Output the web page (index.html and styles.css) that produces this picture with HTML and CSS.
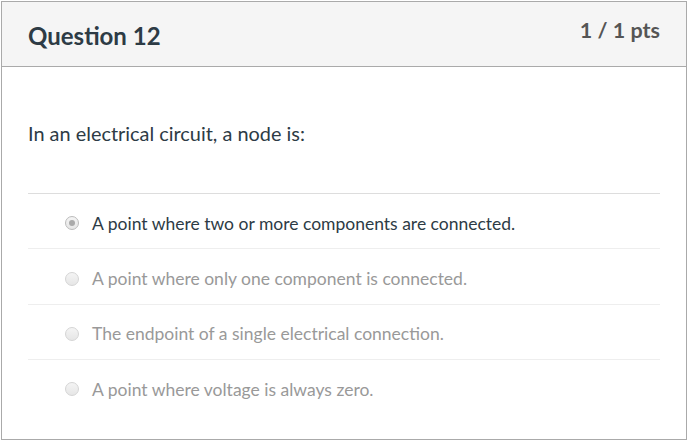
FILE: index.html
```html
<!DOCTYPE html>
<html>
<head>
<meta charset="utf-8">
<link rel="stylesheet" href="styles.css">
</head>
<body>
<div class="card">
  <div class="header">
    <div class="title">Question 12</div>
    <div class="pts">1 / 1 pts</div>
  </div>
  <div class="content">
    <p class="question">In an electrical circuit, a node is:</p>
    <div class="answers">
      <div class="answer selected"><span class="radio"></span><span class="label">A point where two or more components are connected.</span></div>
      <div class="answer"><span class="radio"></span><span class="label">A point where only one component is connected.</span></div>
      <div class="answer"><span class="radio"></span><span class="label">The endpoint of a single electrical connection.</span></div>
      <div class="answer"><span class="radio"></span><span class="label">A point where voltage is always zero.</span></div>
    </div>
  </div>
</div>
</body>
</html>
```

FILE: styles.css
```css
html, body {
  margin: 0;
  padding: 0;
  background: #fff;
}
body {
  padding: 1px;
  font-family: Lato, "Liberation Sans", sans-serif;
  color: #2d3b45;
}
.card {
  width: 684px;
  height: 437px;
  border: 1px solid #aaa;
  box-sizing: content-box;
}
.header {
  display: flex;
  justify-content: space-between;
  align-items: flex-start;
  height: 64px;
  background: #f5f5f5;
  border-bottom: 1px solid #aaa;
  padding: 0 26px 0 26px;
}
.title {
  font-size: 24px;
  line-height: 28px;
  font-weight: 700;
  margin-top: 20px;
  color: #2d3b45;
}
.pts {
  font-size: 21.5px;
  line-height: 26px;
  font-weight: 700;
  margin-top: 15px;
  color: #555;
}
.content {
  padding: 0 26px;
}
.question {
  margin: 0;
  padding-top: 54px;
  height: 72px;
  font-size: 19.9px;
  line-height: 24px;
  color: #2d3b45;
  border-bottom: 1px solid #ddd;
}
.answers {
  display: flex;
  flex-direction: column;
}
.answer {
  display: flex;
  align-items: center;
  height: 54.4px;
  padding-top: 4px;
  box-sizing: content-box;
  height: 50.4px;
  border-bottom: 1px solid #eee;
  padding-left: 37px;
  font-size: 17.5px;
  color: #999;
}
.answer:last-child {
  border-bottom: none;
}
.answer.selected {
  color: #2d3b45;
}
.radio {
  width: 14px;
  height: 14px;
  border-radius: 50%;
  border: 1px solid #d5d5d5;
  background: linear-gradient(#f4f4f4, #e6e6e6);
  margin-right: 13px;
  box-sizing: border-box;
  position: relative;
  flex: none;
}
.selected .radio {
  border-color: #bbb;
}
.selected .radio::after {
  content: "";
  position: absolute;
  left: 3px;
  top: 3px;
  width: 6px;
  height: 6px;
  border-radius: 50%;
  background: #aaa;
}
```
